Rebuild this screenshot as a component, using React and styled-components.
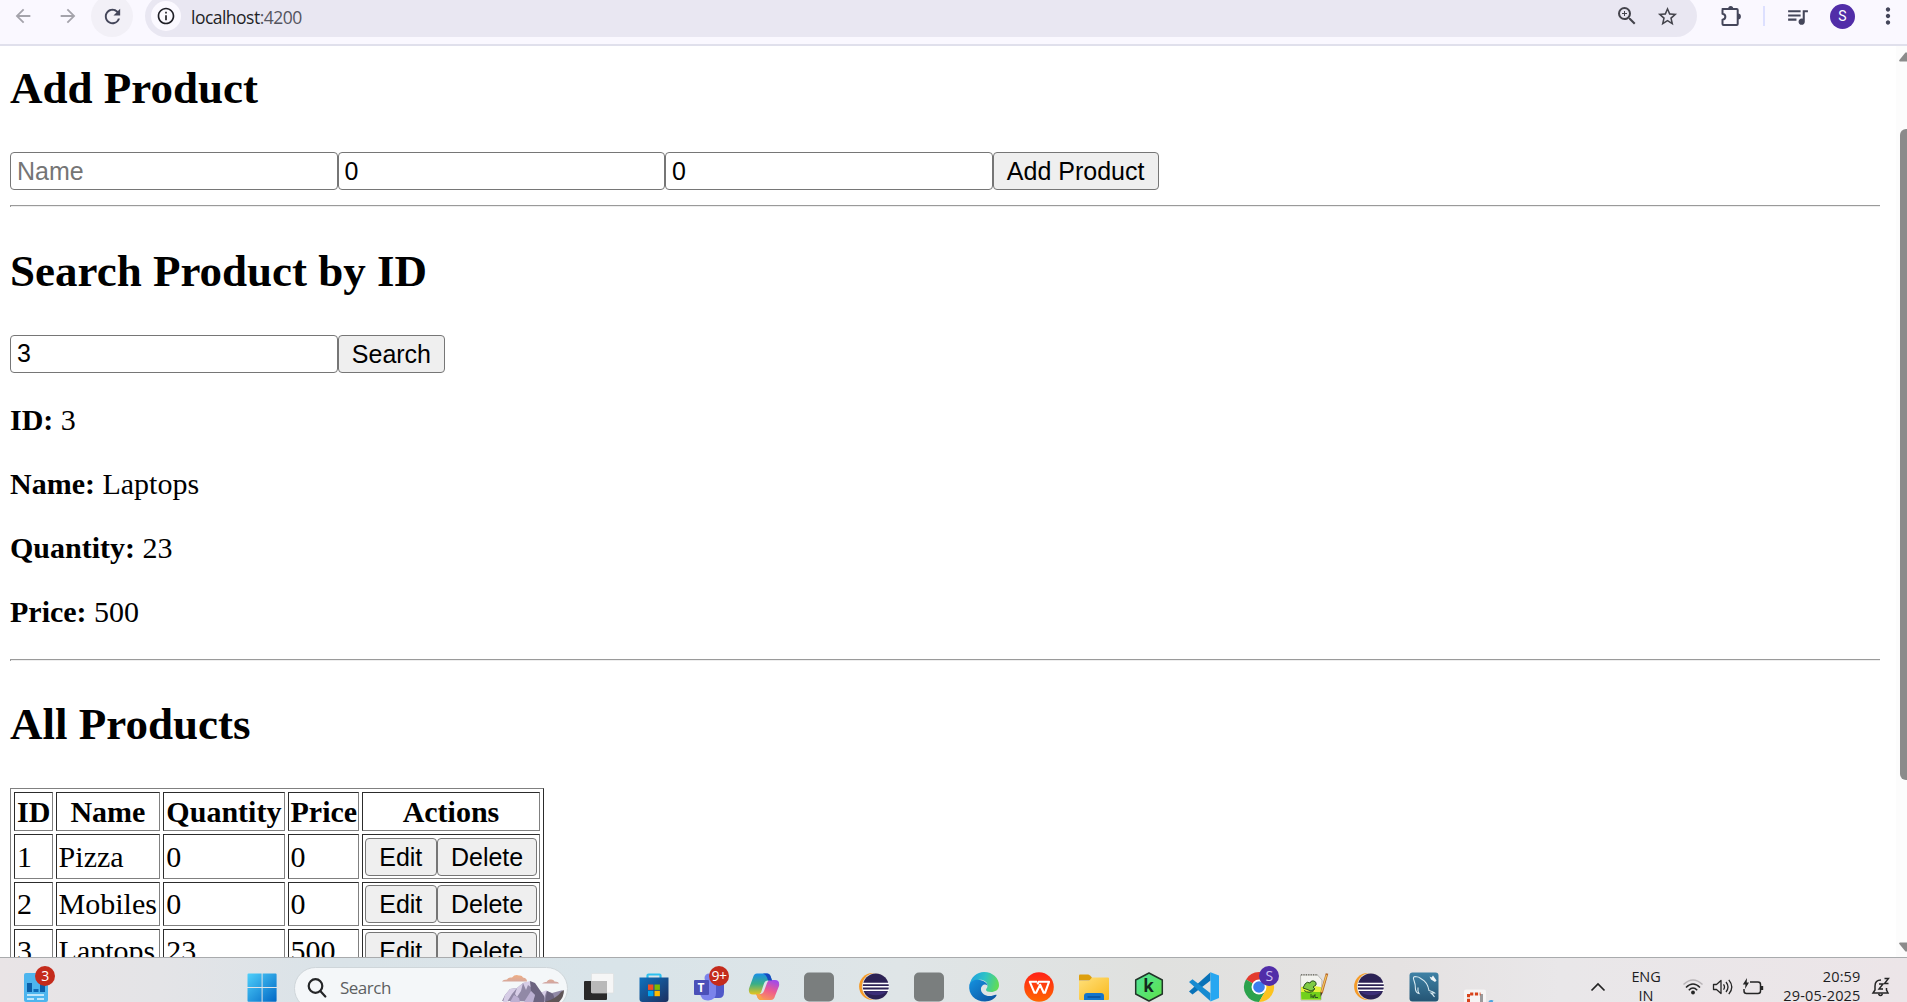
import React, { useState } from "react";
import styled, { createGlobalStyle } from "styled-components";
import {
  MdArrowBack,
  MdArrowForward,
  MdRefresh,
  MdInfoOutline,
  MdZoomIn,
  MdStarBorder,
  MdQueueMusic,
  MdMoreVert,
} from "react-icons/md";

const serif = '"Liberation Serif", "Times New Roman", serif';
const sans = '"Liberation Sans", Arial, sans-serif';
const ui = '"Open Sans", "Noto Sans", sans-serif';

const GlobalStyle = createGlobalStyle`
  html, body { margin: 0; padding: 0; overflow: hidden; background: #fff; }
  *, *::before, *::after { box-sizing: border-box; }
`;

const Screen = styled.div`
  display: flex;
  flex-direction: column;
  width: 1907px;
  height: 1002px;
  overflow: hidden;
  background: #fff;
`;

/* ---------- browser toolbar ---------- */

const Toolbar = styled.header`
  flex: none;
  height: 46px;
  overflow: hidden;
  background: #faf8ff;
  border-bottom: 2px solid #e0e0ec;
`;

const ToolbarRow = styled.div`
  display: flex;
  align-items: center;
  height: 42px;
  margin-top: -5px;
  color: #44465a;
`;

const ToolButton = styled.span`
  display: flex;
  flex: none;
  align-items: center;
  justify-content: center;
  width: ${(p) => p.$w || 45}px;
  height: 42px;
  border-radius: 21px;
  background: ${(p) => p.$bg || "transparent"};
  color: ${(p) => p.$color || "inherit"};
`;

const AddressBar = styled.div`
  display: flex;
  flex: none;
  align-items: center;
  width: 1552px;
  height: 42px;
  margin-left: 12px;
  padding: 0 9px 0 6px;
  border-radius: 21px;
  background: #e9e7f2;
  color: #44444c;
`;

const SiteInfo = styled.span`
  display: flex;
  align-items: center;
  justify-content: center;
  width: 30px;
  height: 30px;
  border-radius: 50%;
  background: #fbf9ff;
  color: #1f1f26;
`;

const Url = styled.span`
  flex: 1;
  margin-left: 10px;
  padding-top: 1px;
  font: 17.5px/24px ${ui};
  letter-spacing: -0.52px;
  color: #1f1f26;
`;

const Port = styled.span`
  color: #55555f;
`;

const Divider = styled.span`
  flex: none;
  width: 2px;
  height: 20px;
  background: #dde0ff;
`;

const Avatar = styled.span`
  display: flex;
  flex: none;
  align-items: center;
  justify-content: center;
  width: 25px;
  height: 25px;
  border-radius: 50%;
  background: #512da8;
  color: #fff;
  font: 14px/25px Roboto, sans-serif;
`;

/* ---------- page ---------- */

const Viewport = styled.div`
  display: flex;
  flex: none;
  height: 911px;
  overflow: hidden;
`;

const Page = styled.main`
  flex: 1;
  min-width: 0;
  padding: 16px 16px 0 10px;
  overflow: hidden;
  font: 30px/34px ${serif};
  color: #000;
`;

const Heading = styled.h2`
  margin: ${(p) => p.$top}px 0 ${(p) => p.$bottom}px;
  font: bold 45px/52px ${serif};
`;

const FormRow = styled.div`
  display: flex;
  height: 38.5px;
`;

const Field = styled.input`
  width: 327.5px;
  height: 38px;
  margin: 0;
  padding: 0 6px;
  border: 1px solid #767676;
  border-radius: 4px;
  outline: none;
  background: #fff;
  color: #000;
  font: 25px ${sans};
  &::placeholder {
    color: #757575;
    opacity: 1;
  }
`;

const Button = styled.button`
  height: 38px;
  margin: 0;
  padding: 0 13.3px;
  border: 1px solid #767676;
  border-radius: 4px;
  background: #efefef;
  color: #000;
  font: 25px/36px ${sans};
  white-space: nowrap;
`;

const Rule = styled.hr`
  height: 2px;
  margin: ${(p) => p.$gap || 14.6}px 0 0;
  border: 0;
  border-top: 1px solid #9a9a9a;
  border-left: 1px solid #9a9a9a;
  background: #eee;
`;

const Detail = styled.p`
  margin: 30px 0 0;
`;

const Table = styled.table`
  border: 1px solid;
  border-color: #808080 #2c2c2c #2c2c2c #808080;
  border-collapse: separate;
  border-spacing: 3.6px;
  table-layout: fixed;
  width: 534px;
`;

const cell = `
  padding: 0 2px;
  border: 1px solid;
  border-color: #2c2c2c #808080 #808080 #2c2c2c;
  white-space: nowrap;
`;

const Th = styled.th`
  ${cell}
  width: ${(p) => p.$w}px;
  height: 39px;
  text-align: center;
  font-weight: bold;
`;

const Td = styled.td`
  ${cell}
  height: ${(p) => p.$h || 44}px;
`;

const Actions = styled.div`
  display: flex;
`;

const Track = styled.aside`
  display: flex;
  flex-direction: column;
  align-items: flex-end;
  justify-content: space-between;
  width: 11px;
  padding: 6px 0 5px;
  background: #fcfcfc;
`;

const Thumb = styled.div`
  width: 7px;
  height: 651px;
  margin-bottom: 96px;
  border-radius: 6px 0 0 6px;
  background: #8b8b8b;
`;

const Arrow = styled.svg`
  display: block;
  width: 8px;
  height: 10px;
`;

/* ---------- taskbar ---------- */

const Taskbar = styled.footer`
  flex: none;
  height: 45px;
  overflow: hidden;
  border-top: 1px solid #a9abad;
  background: linear-gradient(
    90deg,
    #e9e4e6 0,
    #e4e4e7 160px,
    #dae3e8 330px,
    #d9e4e9 620px,
    #dfe5e7 900px,
    #e0e1df 1150px,
    #e5e2e2 1400px,
    #e9e7e9 1560px,
    #ece5e8 1907px
  );
`;

const TaskRow = styled.div`
  display: flex;
  align-items: center;
  height: 57px;
  color: #1d1d1f;
`;

const Slot = styled.span`
  position: relative;
  display: flex;
  flex: none;
  align-items: center;
  justify-content: center;
  width: ${(p) => p.$w || 55}px;
  height: 30px;
  margin-left: ${(p) => p.$ml || 0}px;
`;

const Glyph = styled.svg`
  display: block;
  width: 30px;
  height: 30px;
  overflow: visible;
`;

const Badge = styled.span`
  position: absolute;
  top: -6px;
  left: ${(p) => p.$left}px;
  width: 20px;
  height: 20px;
  border-radius: 50%;
  background: ${(p) => p.$bg || "#c42b1c"};
  color: ${(p) => p.$color || "#fff"};
  font: 14px/20px ${ui};
  letter-spacing: -0.6px;
  text-align: center;
`;

const SearchBox = styled.div`
  display: flex;
  align-items: center;
  flex: none;
  width: 274px;
  height: 43px;
  margin: 3px 3px 0 17.5px;
  padding: 0 3px 0 12px;
  border: 1px solid #cfd6da;
  border-radius: 22px;
  background: #f4f7f9;
`;

const SearchLabel = styled.span`
  flex: 1;
  margin-left: 13px;
  font: 17px/22px ${ui};
  letter-spacing: -0.5px;
  color: #5d5f61;
`;

const TrayText = styled.div`
  flex: none;
  width: ${(p) => p.$w}px;
  height: 48px;
  margin-left: ${(p) => p.$ml}px;
  margin-top: 8px;
  font: 14.5px/19px ${ui};
  letter-spacing: ${(p) => p.$ls || 0}px;
  text-align: ${(p) => p.$align || "center"};
  white-space: nowrap;
`;

const Line = styled.div`
  height: 19px;
`;

function ExtensionIcon() {
  return (
    <svg width="22" height="22" viewBox="-1 0 22 22">
      <path
        d="M2.5 4h14.2q1 0 1 1v14q0 1-1 1H3.5q-1 0-1-1v-4.2c3.8-.6 3.8-5.4 0-6V5q0-1 1-1z"
        fill="none"
        stroke="#44465a"
        strokeWidth="2"
        strokeLinejoin="round"
      />
      <path d="M8.2 3.6a2.5 2.5 0 0 1 5 0zM18 8.6a2.9 2.9 0 0 1 0 5.8z" fill="#44465a" />
    </svg>
  );
}

function WidgetIcon() {
  return (
    <Glyph viewBox="0 0 30 30">
      <rect x="3" y="1" width="24" height="29" rx="2" fill="#4db5ee" />
      <path d="M6 11h5v9H6z" fill="#0a5ea8" />
      <path d="M12.5 17h5v3h-5z" fill="#0d6bb8" />
      <path d="M19 12h5v8h-5z" fill="#0a5ea8" />
      <path d="M6 23h17M6 27h7M16 27h7" stroke="#e6f8ff" strokeWidth="1.6" />
    </Glyph>
  );
}

function WindowsIcon() {
  return (
    <Glyph viewBox="0 0 30 30">
      <defs>
        <linearGradient id="win" x1="0" y1="0" x2="1" y2="1">
          <stop offset="0" stopColor="#4fd0fb" />
          <stop offset="1" stopColor="#0067c5" />
        </linearGradient>
      </defs>
      <path
        d="M1.5 1.5H14.6V15H.5V2.5q0-1 1-1zM15.6 1.5h13q1 0 1 1V15h-14zM.5 16h14.1v13.8H1.5q-1 0-1-1zM15.6 16h14v12.8q0 1-1 1h-13z"
        fill="url(#win)"
      />
    </Glyph>
  );
}

function Mountains() {
  return (
    <svg width="62" height="28" viewBox="0 0 62 28">
      <defs>
        <linearGradient id="cloud" x1="0" y1="0" x2="0" y2="1">
          <stop offset="0" stopColor="#efae84" />
          <stop offset="1" stopColor="#cfa6a4" />
        </linearGradient>
      </defs>
      <path d="M0 7.500q1-2 5-2 1-2.500 5-2 3-3.500 7-2 3-.5 4 2 4 .5 4 4zM40 9.500q2-2 4.500-1.500 1.500-3 4-2.500 3-.5 4 2 4 0 4.500 2z" fill="url(#cloud)" />
      <path d="M0 27l3-6 5-6 7-1 6-5 6-1 5 2 6 9 7-2 5 2 11-3-4 8-4 4z" fill="#9189a6" />
      <path d="M3 21l5-6 7-1-5 6-5 8H1zM15 14l6-5-2 8-4 6-2-3zM21 9l7-2 2 7-4-3-2 5zM38 19l7-3-3 8z" fill="#d6cde6" />
      <path d="M28 7l5 2 9 13v6H31l2-7-4-4zM45 17l6 3 3 8H43z" fill="#6c6480" />
      <path d="M29 17l4 4-2 7h-9zM12 21l5 3 1 4H8z" fill="#bcb0d2" />
      <path d="M62 16q0 7-5 12H43q12-4 16-10z" fill="#5f5557" />
    </svg>
  );
}

function TaskViewIcon() {
  return (
    <Glyph viewBox="0 0 30 30">
      <rect x="0" y="9" width="23" height="19" rx="1" fill="#292929" />
      <rect x="7.5" y="1.5" width="22" height="19.5" rx="1" fill="#f6f6f6" stroke="#ddd" strokeWidth=".6" />
      <path d="M7.5 9H23v12H7.5z" fill="#b9b9b9" />
    </Glyph>
  );
}

function StoreIcon() {
  return (
    <Glyph viewBox="0 0 30 30">
      <defs>
        <linearGradient id="store" x1="0" y1="0" x2="1" y2="1">
          <stop offset="0" stopColor="#0f72bf" />
          <stop offset="1" stopColor="#1d2f5f" />
        </linearGradient>
      </defs>
      <path d="M8.5 7V3.5q0-1 1-1h11q1 0 1 1V7" fill="none" stroke="#2cc0ef" strokeWidth="2.2" />
      <path d="M.5 5.5h29V27q0 3-3 3h-23q-3 0-3-3z" fill="url(#store)" />
      <path d="M9 12.5h5.4v5.4H9z" fill="#f25022" />
      <path d="M15.5 12.5h5.4v5.4h-5.4z" fill="#7fba00" />
      <path d="M9 18.8h5.4v5.4H9z" fill="#00a4ef" />
      <path d="M15.5 18.8h5.4v5.4h-5.4z" fill="#ffb900" />
    </Glyph>
  );
}

const TeamsLetter = styled.span`
  position: absolute;
  left: 12.5px;
  top: 8px;
  width: 15px;
  height: 15px;
  border-radius: 1px;
  background: #4a50b8;
  color: #fff;
  font: bold 12px/15px ${ui};
  text-align: center;
`;

function TeamsIcon() {
  return (
    <>
      <Glyph viewBox="0 0 30 30">
        <path d="M16 11h14v9q0 6-5 6h-9z" fill="#5059c9" />
        <circle cx="15" cy="6" r="4.5" fill="#7b83eb" />
        <path d="M7 10h15v11q0 7-7.5 7.500T6 21z" fill="#7b83eb" />
      </Glyph>
      <TeamsLetter>T</TeamsLetter>
    </>
  );
}

function CopilotIcon() {
  return (
    <Glyph viewBox="0 0 30 30">
      <defs>
        <linearGradient id="cpa" x1=".3" y1="0" x2=".3" y2="1">
          <stop offset="0" stopColor="#1a8fe8" />
          <stop offset=".5" stopColor="#3aaf86" />
          <stop offset="1" stopColor="#e8c41c" />
        </linearGradient>
        <linearGradient id="cpb" x1=".7" y1="0" x2=".3" y2="1">
          <stop offset="0" stopColor="#a04bea" />
          <stop offset=".5" stopColor="#ee5b8e" />
          <stop offset="1" stopColor="#fb9a55" />
        </linearGradient>
      </defs>
      <path d="M8 1.500h10q3 0 4 4l1 3h-4q-3 0-4 3l-3 9q-1 2-4 2H4q-5 0-4-6l4-11q1-4 4-4z" fill="url(#cpa)" />
      <path d="M22 28H12q-3 0-4-4l-1-2h4q3 0 4-3l3-8q1-3 4-3h4q5 0 4 6l-4 10q-1 4-4 4z" fill="url(#cpb)" />
      <path d="M14 1.500h4q3 0 4 4l1 3h-4l-1-3q-1-3-4-4z" fill="#1648c0" />
      <path d="M16 28h-4q-3 0-4-4l-1-2h4l1 2q1 3 4 4z" fill="#f8a14c" />
    </Glyph>
  );
}

function BlankIcon() {
  return (
    <Glyph viewBox="0 0 30 30">
      <rect y=".5" width="30" height="29" rx="5" fill="#7a7e7e" />
    </Glyph>
  );
}

function EclipseIcon() {
  return (
    <Glyph viewBox="0 0 30 30">
      <circle cx="13.500" cy="14.500" r="13.400" fill="#f59b28" />
      <ellipse cx="16.300" cy="14.500" rx="13.400" ry="13.600" fill="#e5e0da" />
      <circle cx="16.800" cy="14.500" r="13" fill="#2c2255" />
      <path d="M6 19.500h22a13 8 0 0 1-22 0z" fill="#443587" opacity=".7" />
      <path d="M4 11.500h26M3.500 14.800h26.500M4 18.200h26" stroke="#fff" strokeWidth="1.600" />
    </Glyph>
  );
}

function EdgeIcon() {
  return (
    <Glyph viewBox="0 0 30 30">
      <defs>
        <linearGradient id="edga" x1="0" y1=".3" x2="1" y2=".5">
          <stop offset="0" stopColor="#1f9fe0" />
          <stop offset=".5" stopColor="#2dc3c6" />
          <stop offset="1" stopColor="#62dc55" />
        </linearGradient>
        <linearGradient id="edgb" x1="0" y1="0" x2="1" y2="1">
          <stop offset="0" stopColor="#1492e0" />
          <stop offset="1" stopColor="#0c4f9c" />
        </linearGradient>
      </defs>
      <path d="M.5 13C2 5 8 0 15 0c9 0 15 6.500 15 13 0 5-4 7-8 7-3 0-5-1-5-2.300 0-1 1.500-1.400 1.500-4C18.500 10 14 7 9 8S1 12 .5 13z" fill="url(#edga)" />
      <path d="M.3 13C2 8 7 7 11 8c5 1 7.500 3.500 7.500 5.700-2-2.500-7-.7-6.500 4.300.5 4 6 7.500 12 5.500 1.500-.5 3-1 3.700-.4C26 27 21 29.500 16 29.500 6 29.500-1 22 .3 13z" fill="url(#edgb)" />
    </Glyph>
  );
}

function WpsIcon() {
  return (
    <Glyph viewBox="0 0 30 30">
      <defs>
        <linearGradient id="wps" x1="0" y1="0" x2="0" y2="1">
          <stop offset="0" stopColor="#ff2118" />
          <stop offset="1" stopColor="#ff6600" />
        </linearGradient>
      </defs>
      <circle cx="15" cy="15" r="14.800" fill="url(#wps)" />
      <path
        d="M13 9.800H5.800l4.700 11h1.600l4-8 3.600 8h1.300l4-11H14.500l-1 2.500"
        fill="none"
        stroke="#fff"
        strokeWidth="2.100"
        strokeLinejoin="round"
      />
    </Glyph>
  );
}

function FolderIcon() {
  return (
    <Glyph viewBox="0 0 30 30">
      <defs>
        <linearGradient id="fold" x1="0" y1="0" x2="1" y2="1">
          <stop offset="0" stopColor="#ffe07a" />
          <stop offset="1" stopColor="#f9b91d" />
        </linearGradient>
      </defs>
      <path d="M0 3.500q0-1 1-1h8q1 0 2 1l2 2v3H0z" fill="#dd9f0d" />
      <path d="M0 9h10l3-3.500h16q1 0 1 1V27q0 1-1 1H1q-1 0-1-1z" fill="url(#fold)" />
      <path d="M5 28v-4q0-3 3-3h14q3 0 3 3v4z" fill="#1475cc" />
      <path d="M8.500 25h13" stroke="#07468c" strokeWidth="1.200" />
    </Glyph>
  );
}

const HexLetter = styled.span`
  position: absolute;
  inset: 0;
  color: #14291d;
  font: bold 17px/28px "Open Sans", sans-serif;
  text-align: center;
`;

function KIcon() {
  return (
    <>
      <Glyph viewBox="0 0 30 30">
        <defs>
          <linearGradient id="hex" x1="0" y1="0" x2="1" y2="1">
            <stop offset="0" stopColor="#50e39d" />
            <stop offset="1" stopColor="#5ee247" />
          </linearGradient>
        </defs>
        <path d="M15 1L28.300 8v14L15 29 1.700 22V8z" fill="url(#hex)" stroke="#223429" strokeWidth="1.500" strokeLinejoin="round" />
      </Glyph>
      <HexLetter>k</HexLetter>
    </>
  );
}

function CodeIcon() {
  return (
    <Glyph viewBox="0 0 30 30">
      <path d="M21.500 8.500L3.500 22.500 0 19.500 21.500.300z" fill="#0872b8" />
      <path d="M0 10l3.500-2.700 18 14v8z" fill="#168bd1" />
      <path d="M21.500.300L30 3.500V26l-8.500 3.500z" fill="#27a7f1" />
    </Glyph>
  );
}

function ChromeIcon() {
  return (
    <Glyph viewBox="0 0 30 30">
      <path d="M15 15L2 7.500A15 15 0 0 1 28 7.500H15z" fill="#e33b2e" />
      <path d="M15 15L2 7.500A15 15 0 0 0 15 30l6.500-11.300z" fill="#2ba24c" />
      <path d="M15 7.500h13A15 15 0 0 1 15 30l6.500-11.300z" fill="#fcc31e" />
      <circle cx="15" cy="15" r="7.500" fill="#fff" />
      <circle cx="15" cy="15" r="5.800" fill="#3b7ded" />
    </Glyph>
  );
}

function NotepadIcon() {
  return (
    <Glyph viewBox="0 0 30 30">
      <path d="M1.500 3h17l4.500 5-1 20H2z" fill="#f3f3ef" stroke="#a5a5a0" strokeWidth=".7" />
      <path d="M2 2.800h17" stroke="#77776f" strokeWidth="1.600" strokeDasharray="1.200 1.200" />
      <path d="M2 15q9-2 20 0v12.500H2.400z" fill="#e2f13a" />
      <path d="M2 20h20v7.500H2.400z" fill="#72d01b" />
      <path d="M6 12q2-3 5-1 1-3 4-2 3 1 2 4l-3 2 2 2-4 2-5-2-3-1z" fill="#7fcb45" stroke="#2b5320" strokeWidth="1" />
      <path d="M5 18.500q5 3.500 10 0M12 22v3.500l2-2v2.500l2-3.500v3h3" fill="none" stroke="#2b5320" strokeWidth="1" />
      <path d="M28 1.500L22.500 21" stroke="#b8692a" strokeWidth="2.600" />
      <path d="M27.500 3l-5 17" stroke="#f2c45b" strokeWidth="1.200" />
      <path d="M21.500 20.500l2 .5-2 4z" fill="#4b3a28" />
    </Glyph>
  );
}

function MysqlIcon() {
  return (
    <Glyph viewBox="0 0 30 30">
      <defs>
        <linearGradient id="mys" x1="0" y1="0" x2="0" y2="1">
          <stop offset="0" stopColor="#3f82a6" />
          <stop offset="1" stopColor="#255574" />
        </linearGradient>
      </defs>
      <rect x=".5" y=".5" width="29" height="29" rx="3" fill="url(#mys)" />
      <path
        d="M9 15.500q-.5 4 1 6-3-.5-3.500-4Q6.500 12 5 8.500 3.500 5 6 4.500q4 0 6.500 2.500 6 3 7.500 11.500 4 1 5.500 2.500l-3.500 0q2 1.500 3.500 4"
        fill="none"
        stroke="#d9ebf2"
        strokeWidth="1.100"
      />
      <path d="M20.500 4.500l2 1 1.500-2 3.500 5-1.500 1.500-4-2.500z" fill="#eef5f7" />
    </Glyph>
  );
}

function SnipIcon() {
  return (
    <Glyph viewBox="0 0 30 30">
      <rect x="0" y="17.500" width="22" height="20" rx="2" fill="#f6f4f4" />
      <path d="M17.500 22v8" stroke="#9a9a9c" strokeWidth="3" />
      <path d="M4.500 30V22h12" fill="none" stroke="#d8431a" strokeWidth="3" strokeDasharray="3.200 1.600" />
      <path d="M25 30q2-1.500 4-.5" stroke="#4aa3df" strokeWidth="2" fill="none" />
    </Glyph>
  );
}

const products = [
  { id: 1, name: "Pizza", quantity: 0, price: 0 },
  { id: 2, name: "Mobiles", quantity: 0, price: 0 },
  { id: 3, name: "Laptops", quantity: 23, price: 500 },
];

const columns = [
  ["ID", 38.5],
  ["Name", 104.3],
  ["Quantity", 121],
  ["Price", 71.2],
  ["Actions", 177.5],
];

const apps = [
  TaskViewIcon,
  StoreIcon,
  TeamsIcon,
  CopilotIcon,
  BlankIcon,
  EclipseIcon,
  BlankIcon,
  EdgeIcon,
  WpsIcon,
  FolderIcon,
  KIcon,
  CodeIcon,
  ChromeIcon,
  NotepadIcon,
  EclipseIcon,
  MysqlIcon,
  SnipIcon,
];

function BrowserToolbar() {
  return (
    <Toolbar>
      <ToolbarRow>
        <ToolButton $color="#a4a3ab"><MdArrowBack size={22} /></ToolButton>
        <ToolButton $color="#a4a3ab"><MdArrowForward size={22} /></ToolButton>
        <ToolButton $w={1} />
        <ToolButton $w={42} $bg="#f2f0f7"><MdRefresh size={23} /></ToolButton>
        <AddressBar>
          <SiteInfo><MdInfoOutline size={20} /></SiteInfo>
          <Url>localhost<Port>:4200</Port></Url>
          <ToolButton $w={40}><MdZoomIn size={24} /></ToolButton>
          <ToolButton $w={41}><MdStarBorder size={23} /></ToolButton>
        </AddressBar>
        <ToolButton $w={66}><ExtensionIcon /></ToolButton>
        <Divider />
        <ToolButton $w={65}><MdQueueMusic size={25} /></ToolButton>
        <Avatar>S</Avatar>
        <ToolButton $w={65}><MdMoreVert size={26} /></ToolButton>
      </ToolbarRow>
    </Toolbar>
  );
}

function ProductPage() {
  const [name, setName] = useState("");
  const [quantity, setQuantity] = useState("0");
  const [price, setPrice] = useState("0");
  const [searchId, setSearchId] = useState("3");
  const found = products[2];
  const change = (set) => (e) => set(e.target.value);

  return (
    <Page>
      <Heading $top={0} $bottom={38}>Add Product</Heading>
      <FormRow>
        <Field placeholder="Name" value={name} onChange={change(setName)} />
        <Field value={quantity} onChange={change(setQuantity)} />
        <Field value={price} onChange={change(setPrice)} />
        <Button>Add Product</Button>
      </FormRow>
      <Rule />

      <Heading $top={38.1} $bottom={37.4}>Search Product by ID</Heading>
      <FormRow>
        <Field value={searchId} onChange={change(setSearchId)} />
        <Button>Search</Button>
      </FormRow>
      <Detail><b>ID:</b> {found.id}</Detail>
      <Detail><b>Name:</b> {found.name}</Detail>
      <Detail><b>Quantity:</b> {found.quantity}</Detail>
      <Detail><b>Price:</b> {found.price}</Detail>
      <Rule $gap={29.8} />

      <Heading $top={37.3} $bottom={38.1}>All Products</Heading>
      <Table>
        <thead>
          <tr>
            {columns.map(([label, w]) => <Th key={label} $w={w}>{label}</Th>)}
          </tr>
        </thead>
        <tbody>
          {products.map((p, i) => {
            const h = i === 0 ? 45 : 44;
            return (
              <tr key={p.id}>
                <Td $h={h}>{p.id}</Td>
                <Td $h={h}>{p.name}</Td>
                <Td $h={h}>{p.quantity}</Td>
                <Td $h={h}>{p.price}</Td>
                <Td $h={h}>
                  <Actions>
                    <Button>Edit</Button>
                    <Button>Delete</Button>
                  </Actions>
                </Td>
              </tr>
            );
          })}
        </tbody>
      </Table>
    </Page>
  );
}

function WindowsTaskbar() {
  return (
    <Taskbar>
      <TaskRow>
        <Slot $w={30} $ml={21}>
          <WidgetIcon />
          <Badge $left={14}>3</Badge>
        </Slot>
        <Slot $w={30} $ml={195.5}><WindowsIcon /></Slot>
        <SearchBox>
          <svg width="20" height="20" viewBox="0 0 20 20" fill="none" stroke="#242628" strokeWidth="2.200">
            <circle cx="8.500" cy="8" r="6.800" />
            <path d="M13.300 13l5 5.500" strokeLinecap="round" />
          </svg>
          <SearchLabel>Search</SearchLabel>
          <Mountains />
        </SearchBox>
        {apps.map((Icon, i) => (
          <Slot key={i}>
            <Icon />
            {Icon === TeamsIcon && <Badge $left={28}>9+</Badge>}
            {Icon === ChromeIcon && <Badge $left={28} $bg="#512da8" $color="#cfc1f2">S</Badge>}
          </Slot>
        ))}
        <Slot $w={16} $ml={84}>
          <svg width="16" height="10" viewBox="0 0 16 10" fill="none" stroke="#222" strokeWidth="1.700">
            <path d="M1.500 8.500L8 2l6.500 6.500" />
          </svg>
        </Slot>
        <TrayText $ml={20} $w={40} $ls={-0.1}>
          <Line>ENG</Line>
          <Line>IN</Line>
        </TrayText>
        <Slot $w={22} $ml={15.5}>
          <svg width="22" height="18" viewBox="0 0 22 18" fill="none" strokeWidth="1.500">
            <path d="M1.500 6.500q9.500-9 19 0" stroke="#b9b5b7" />
            <path d="M4 9.500q7-7 14 0M6.800 12.200q4.200-4.300 8.400 0" stroke="#252525" />
            <circle cx="11" cy="14.500" r="1.900" fill="#252525" />
          </svg>
        </Slot>
        <Slot $w={22} $ml={8}>
          <svg width="22" height="18" viewBox="0 0 22 18" fill="none" stroke="#252525" strokeWidth="1.300">
            <path d="M1.500 6.500h3L9 2.500v13l-4.500-4h-3z" strokeLinejoin="round" />
            <path d="M11.500 6.300q2 2.700 0 5.400M14 4q4 5 0 10M16.800 1.800q6 7.200 0 14.400" />
          </svg>
        </Slot>
        <Slot $w={22} $ml={8}>
          <svg width="22" height="18" viewBox="0 0 22 18" fill="none" stroke="#252525" strokeWidth="1.500">
            <path d="M8 4h8q2.500 0 2.500 2.500v6.500q0 2.500-2.500 2.500H4.500Q2 15.500 2 13v-2" />
            <path d="M20 8v4" strokeWidth="2.400" />
            <path d="M5 0L.8 6.500h2.700L3 11l4-6.500H4.700z" fill="#252525" stroke="none" />
          </svg>
        </Slot>
        <TrayText $ml={13} $w={84} $align="right" $ls={0.15}>
          <Line>20:59</Line>
          <Line>29-05-2025</Line>
        </TrayText>
        <Slot $w={20} $ml={10}>
          <svg width="20" height="20" viewBox="0 0 20 20" fill="none" stroke="#252525" strokeWidth="1.500">
            <path d="M10 3Q4 3 4 9v4l-2 3h15l-1.500-3v-2M7.500 17q2 3 4 0" />
            <path d="M8 7h4l-4 5h4M13.500 1.500h4l-4 5h4" strokeWidth="1.400" />
          </svg>
        </Slot>
      </TaskRow>
    </Taskbar>
  );
}

export default function App() {
  return (
    <Screen>
      <GlobalStyle />
      <BrowserToolbar />
      <Viewport>
        <ProductPage />
        <Track>
          <Arrow viewBox="0 0 8 10"><path d="M8 .500H6.500L.400 8q-.8 1.500.8 1.500H8z" fill="#8b8b8b" /></Arrow>
          <Thumb />
          <Arrow viewBox="0 0 8 10"><path d="M8 9.500H6.500L.400 2Q-.4.500 1.200.500H8z" fill="#8b8b8b" /></Arrow>
        </Track>
      </Viewport>
      <WindowsTaskbar />
    </Screen>
  );
}
